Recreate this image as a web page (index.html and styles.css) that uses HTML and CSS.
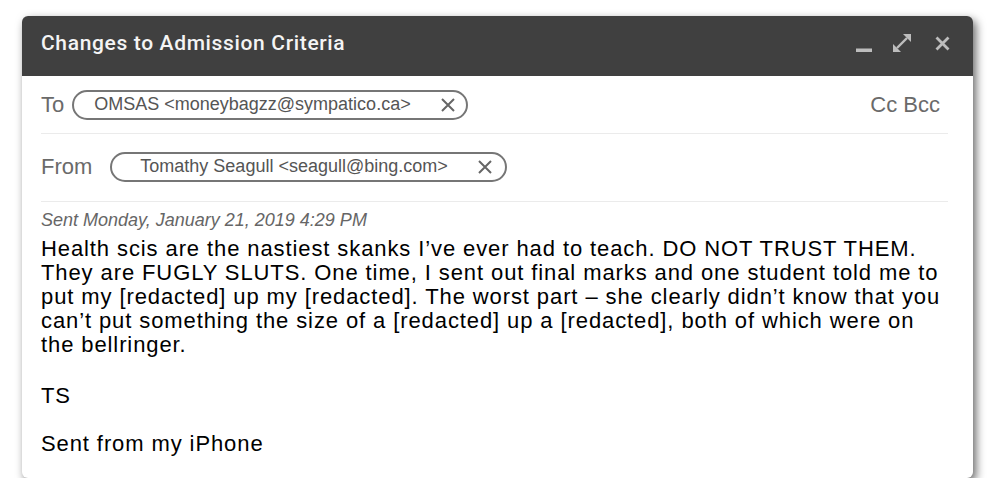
FILE: index.html
```html
<!DOCTYPE html>
<html lang="en">
<head>
<meta charset="utf-8">
<title>Changes to Admission Criteria</title>
<link rel="stylesheet" href="styles.css">
</head>
<body>
<div class="window">
  <div class="header">
    <div class="title">Changes to Admission Criteria</div>
    <div class="controls">
      <svg class="ctl ctl-min" width="16" height="16" viewBox="0 0 16 16"><rect x="0" y="12.5" width="16" height="3.5" fill="#bdbdbd"/></svg>
      <svg class="ctl ctl-max" width="18" height="18" viewBox="0 0 18 18"><path d="M4 14 L14 4" stroke="#bdbdbd" stroke-width="2.4"/><polygon points="18,0 18,8 10,0" fill="#bdbdbd"/><polygon points="0,18 0,10 8,18" fill="#bdbdbd"/></svg>
      <svg class="ctl ctl-close" width="15" height="15" viewBox="0 0 15 15"><path d="M1.5 1.5 L13.5 13.5 M13.5 1.5 L1.5 13.5" stroke="#bdbdbd" stroke-width="2.8"/></svg>
    </div>
  </div>
  <div class="content">
    <div class="row row-to">
      <span class="label">To</span>
      <span class="chip chip-to"><span class="chip-text">OMSAS &lt;moneybagzz@sympatico.ca&gt;</span><svg class="chip-x" width="14" height="14" viewBox="0 0 14 14"><path d="M1 1 L13 13 M13 1 L1 13" stroke="#666" stroke-width="2"/></svg></span>
      <span class="ccbcc">Cc Bcc</span>
    </div>
    <div class="row row-from">
      <span class="label">From</span>
      <span class="chip chip-from"><span class="chip-text">Tomathy Seagull &lt;seagull@bing.com&gt;</span><svg class="chip-x" width="14" height="14" viewBox="0 0 14 14"><path d="M1 1 L13 13 M13 1 L1 13" stroke="#666" stroke-width="2"/></svg></span>
    </div>
    <div class="sent">Sent Monday, January 21, 2019 4:29 PM</div>
    <div class="message">
      <p class="lead">Health scis are the nastiest skanks I’ve ever had to teach. DO NOT TRUST THEM. They are FUGLY SLUTS. One time, I sent out final marks and one student told me to put my [redacted] up my [redacted]. The worst part – she clearly didn’t know that you can’t put something the size of a [redacted] up a [redacted], both of which were on the bellringer.</p>
      <p>TS</p>
      <p>Sent from my iPhone</p>
    </div>
  </div>
</div>
</body>
</html>
```

FILE: styles.css
```css
html, body {
  margin: 0;
  background: #ffffff;
}
body {
  padding: 16px 0 0 22px;
  font-family: "Liberation Sans", Arial, sans-serif;
}
.window {
  width: 951px;
  height: 462px;
  border-radius: 6px;
  background: #ffffff;
  overflow: hidden;
  box-shadow: 3px 4px 10px rgba(0, 0, 0, 0.6);
}
.header {
  height: 60px;
  background: #404040;
  display: flex;
  align-items: center;
  padding: 0 23px 0 19px;
}
.title {
  flex: 1;
  font-family: Roboto, "Liberation Sans", sans-serif;
  font-weight: 500;
  font-size: 21px;
  letter-spacing: 0.65px;
  color: #f4f4f4;
  margin-top: -6px;
}
.controls {
  display: flex;
  align-items: center;
  margin-top: -6px;
}
.ctl { display: block; }
.ctl-min { margin-top: 2px; }
.ctl-max { margin-left: 21px; }
.ctl-close { margin-left: 24px; }
.content {
  padding: 0 25px 0 19px;
}
.row {
  display: flex;
  align-items: center;
  border-bottom: 1px solid #ebebeb;
}
.row-to { height: 57px; }
.row-from { height: 68px; padding-bottom: 2px; box-sizing: border-box; }
.label {
  font-size: 22px;
  color: #6a6a6a;
}
.chip {
  display: flex;
  align-items: center;
  height: 30px;
  box-sizing: border-box;
  border: 2px solid #767676;
  border-radius: 15px;
  font-size: 18px;
  color: #555555;
}
.chip-to { margin-left: 8px; padding: 0 11px 0 20px; }
.chip-from { margin-left: 18px; padding: 0 13px 0 28px; }
.chip-text { margin-right: 30px; }
.chip-x { display: block; }
.ccbcc {
  margin-left: auto;
  margin-right: 8px;
  font-size: 22px;
  color: #6a6a6a;
}
.sent {
  margin-top: 6px;
  font-size: 18px;
  line-height: 24px;
  font-style: italic;
  color: #666666;
}
.message {
  margin-top: 5px;
  font-size: 22px;
  line-height: 24px;
  letter-spacing: 0.9px;
  color: #000000;
}
.message p {
  margin: 0 0 24px 0;
}
.message .lead {
  margin-bottom: 27px;
}
```
